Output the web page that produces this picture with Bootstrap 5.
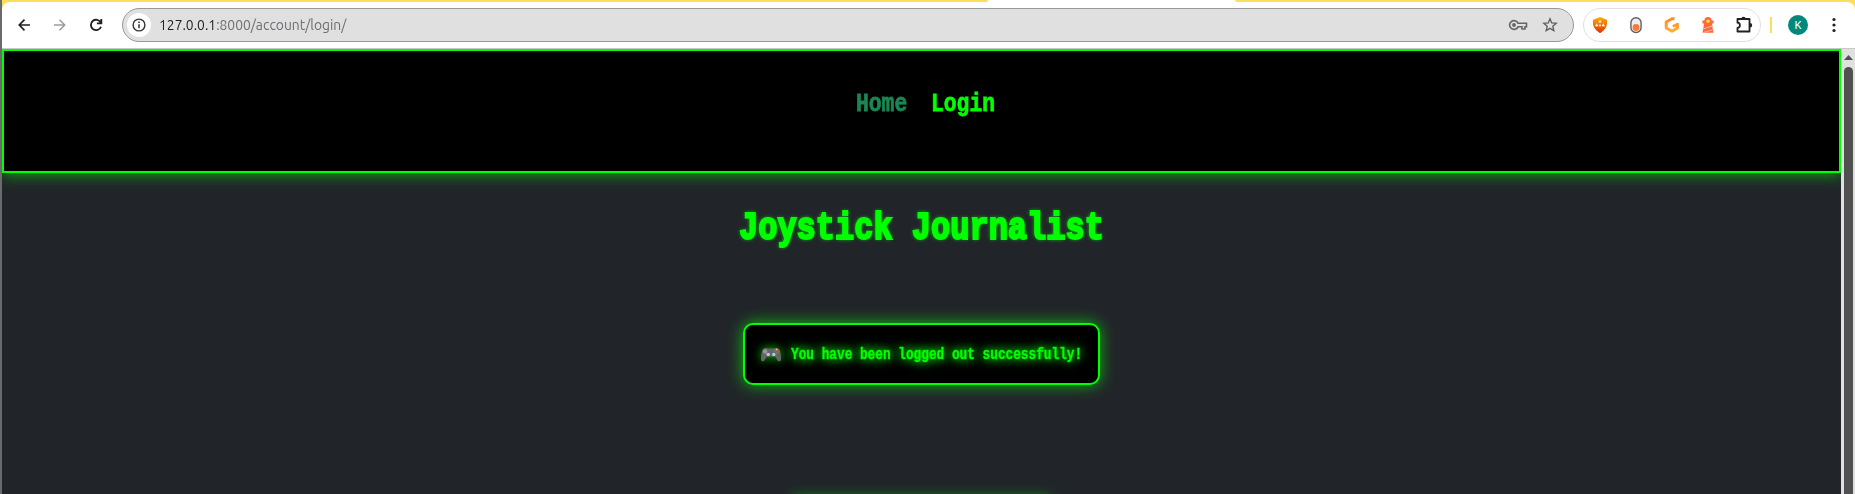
<!DOCTYPE html>
<html lang="en">
<head>
<meta charset="utf-8">
<title>Joystick Journalist</title>
<link href="https://cdn.jsdelivr.net/npm/bootstrap@5.3.0/dist/css/bootstrap.min.css" rel="stylesheet">
<style>
html,body{height:494px;overflow:hidden}
body{background:#6b6b6b;padding-left:2px}
.window{height:494px;background:#fff}
.tabs-edge{height:2px;background:#ffdd5c;padding-left:985px}
.tab-active{width:249px;height:2px;background:#fff;border-radius:3px 3px 0 0}
.toolbar{height:46px;background:#fff;border-radius:8px 8px 0 0}
.toolbar-wrap{background:#ffdd5c;border-bottom:1px solid #c9c9c9}
.nav-icons{width:120px;padding-left:13px;gap:12px}
.address{width:1452px;height:34px;border:1px solid #999;border-radius:17px;background:#e0e0e0;padding:0 15px 0 4px}
.info{width:24px;height:24px;border-radius:50%;background:#fff}
.url{font:14.4px "Ubuntu","Noto Sans",sans-serif;color:#202124;margin-left:8px;white-space:nowrap;transform-origin:left;transform:scaleX(.963)}
.url span{color:#6b6d70}
.extensions{width:178px;height:34px;border:1px solid #e1e1e4;border-radius:17px;margin-left:9px;padding:0 6px;gap:16px}
.divider{width:2px;height:16px;background:#ffdc5d;margin-left:9px}
.avatar{width:20px;height:20px;border-radius:50%;background:#00897b;color:#fff;font:11px Roboto,sans-serif;margin-left:16px}
.view{height:445px}
.page{width:1839px;background:#212529;overflow:hidden}
.site-head{height:124px;border:2px solid #0f0;background:#000;box-shadow:0 0 15px rgba(0,255,0,.75);clip-path:inset(0 0 -30px 0);padding-top:37px}
.terminal{font-family:"Liberation Mono",monospace;font-weight:700;color:#0f0;white-space:pre;display:block}
.terminal>span{display:inline-block;transform-origin:left;-webkit-text-stroke:.4px currentColor}
.menu-item{font-size:26px;line-height:32px}
.menu-item>span{transform:scaleX(.8205);-webkit-text-stroke:.8px currentColor}
.home{width:51px;color:#198754;margin-left:8px}
.login{width:64px;margin-left:24px}
.headline{width:365px;font-size:39px;line-height:52px;margin:30px auto 0;text-shadow:0 0 5px #0f0}
.headline>span{transform:scaleX(.8205);-webkit-text-stroke:2px currentColor}
.notice{width:357px;height:62px;margin:68px auto 0;border:2px solid #0f0;border-radius:10px;background:#000;box-shadow:0 0 15px rgba(0,255,0,.7);padding:2px 0 0 15px}
.notice .terminal{width:292px;font-size:16px;line-height:24px;margin-left:9px;text-shadow:0 0 10px #0f0,0 0 14px #0f0}
.notice .terminal>span{transform:scaleX(.798)}
.pad{filter:drop-shadow(0 0 5px #0c0)}
.panel{width:258px;height:40px;margin:112px auto 0;box-shadow:0 0 12px rgba(0,255,0,.5);background:#000}
.scroll{width:14px;background:#e0e0e0}
.thumb{width:9px;height:450px;background:#505050;border-radius:5px 5px 0 0;margin:7px auto 0 3px}
.arrow{display:block;margin:6px 0 0 3px}
</style>
</head>
<body>
<div class="window">
<div class="tabs-edge"><div class="tab-active"></div></div>
<div class="toolbar-wrap"><div class="toolbar d-flex align-items-center">
 <div class="nav-icons d-flex align-items-center flex-shrink-0">
  <svg width="20" height="20" viewBox="0 0 20 20" fill="none" stroke="#202124" stroke-width="1.7"><path d="M15 10H4.5M9.5 4.7 4.3 10l5.2 5.3"/></svg>
  <svg class="ms-1" width="20" height="20" viewBox="0 0 20 20" fill="none" stroke="#9d9da0" stroke-width="1.6"><path d="M3 10h10.500M8.500 4.700l5.200 5.300-5.200 5.300"/></svg>
  <svg class="ms-1" width="20" height="20" viewBox="0 0 20 20" fill="none" stroke="#202124" stroke-width="1.9"><path d="M13.800 7.700A5.200 5.200 0 1 0 14 11.700M14.300 4v4.400H9.900"/></svg>
 </div>
 <div class="address d-flex align-items-center flex-shrink-0">
  <div class="info d-flex align-items-center justify-content-center"><svg width="14" height="14" viewBox="0 0 14 14"><circle cx="7" cy="7" r="5.9" fill="none" stroke="#333" stroke-width="1.4"/><path d="M7 6.2v4M7 3.4v1.5" stroke="#333" stroke-width="1.5"/></svg></div>
  <div class="url">127.0.0.1<span>:8000/account/login/</span></div>
  <svg class="ms-auto" width="20" height="14" viewBox="0 0 20 14" fill="none" stroke="#656565" stroke-width="1.6"><path d="M10 5.2A4.4 4.400 0 1 0 10 8.800h4v2.200h3V8.800h1.500V5.200z"/><circle cx="6" cy="7" r="1.9" fill="#656565" stroke="none"/></svg>
  <svg style="margin-left:14px" width="16" height="16" viewBox="0 0 16 16" fill="none" stroke="#606060" stroke-width="1.4"><path d="m8 1.8 1.7 4.1 4.5.4-3.4 3 1 4.3L8 11.3l-3.8 2.3 1-4.3-3.4-3 4.500-.4z"/></svg>
 </div>
 <div class="extensions d-flex align-items-center flex-shrink-0">
  <svg width="20" height="18" viewBox="0 0 20 18"><defs><linearGradient id="a" x2="0" y2="1"><stop stop-color="#ffb000"/><stop offset="1" stop-color="#dc2d08"/></linearGradient><linearGradient id="g" x2="0" y2="1"><stop stop-color="#ff8b28"/><stop offset="1" stop-color="#ffae35"/></linearGradient></defs><path d="m10 1 7 2.700c.7 6.400-1.500 9.700-7 13.500-5.500-3.800-7.700-7.100-7-13.500z" fill="url(#a)"/><path d="m10 3.800 1.700 2.700H8.300zM6.700 7.300l1.700 3H5zM13.300 7.300l1.700 3h-3.400zM10 7.800l1.200 2.500H8.800z" fill="#fff"/></svg>
  <svg width="20" height="18" viewBox="0 0 20 18"><rect x="4.900" y="1.700" width="10.200" height="14.800" rx="5" fill="#eee" stroke="#5d6268" stroke-width="1.400"/><circle cx="10" cy="11.500" r="3.400" fill="#fa7935"/></svg>
  <svg width="20" height="18" viewBox="0 0 20 18"><path d="M12.500 2.800 10 2.700 4.200 6v6l5.800 3.300 5.500-3.300V8.200L10.800 10.500" fill="none" stroke="url(#g)" stroke-width="2.900" stroke-linejoin="round"/></svg>
  <svg width="20" height="18" viewBox="0 0 20 18"><path d="M10 1c2.400 0 3.600 1.500 3.600 3.500h2v3h-1.700l1.600 9.300H4.500l1.600-9.300H4.400v-3h2C6.400 2.500 7.600 1 10 1z" fill="#ff673d"/><path d="m5 13 9-3M5.500 16.500l10-3" stroke="#ffb59d" stroke-width="1"/><circle cx="10" cy="5.300" r="1.800" fill="#ffe23f"/></svg>
  <svg width="20" height="18" viewBox="0 0 20 18"><path d="M3.500 3h12v12.500h-12v-3.700c3.200-.2 3.200-4.900 0-5.100z" fill="none" stroke="#202124" stroke-width="1.800" stroke-linejoin="round"/><path d="M7.300 3a2.200 2.200 0 0 1 4.400 0zM16 7a2.200 2.200 0 0 1 0 4.400z" fill="#202124"/></svg>
 </div>
 <div class="divider"></div>
 <div class="avatar d-flex align-items-center justify-content-center flex-shrink-0">K</div>
 <svg style="margin-left:24px" width="4" height="16" viewBox="0 0 4 16" fill="#202124"><circle cx="2" cy="2.500" r="1.600"/><circle cx="2" cy="8" r="1.600"/><circle cx="2" cy="13.500" r="1.600"/></svg>
</div></div>
<div class="view d-flex">
 <main class="page flex-shrink-0">
  <header class="site-head d-flex justify-content-center">
   <a class="terminal menu-item home text-decoration-none"><span>Home</span></a>
   <a class="terminal menu-item login text-decoration-none"><span>Login</span></a>
  </header>
  <h1 class="terminal headline"><span>Joystick Journalist</span></h1>
  <div class="notice d-flex align-items-center">
   <svg class="pad" width="22" height="16" viewBox="0 0 22 16"><path d="M4 1.500Q5.500.5 8 1.500h6q2.500-1 4 0c2 .6 3 6.500 3 10.500 0 3-2.700 3-3.800.8L15 9.500H7l-2.200 3.300C3.700 15 1 15 1 12 1 8 2 2.100 4 1.500z" fill="#68636d"/><circle cx="5.200" cy="4.500" r="2.200" fill="#99949d"/><circle cx="8.200" cy="7.500" r="1.700" fill="#c8c4cb"/><circle cx="13.800" cy="7.500" r="1.700" fill="#c8c4cb"/><circle cx="16.700" cy="2.500" r="1.100" fill="#f7ba22"/><circle cx="18.700" cy="4.500" r="1.300" fill="#f13d42"/><circle cx="14.800" cy="4.500" r="1" fill="#268de8"/><circle cx="16.700" cy="6" r="1" fill="#31a83c"/></svg>
   <div class="terminal"><span>You have been logged out successfully!</span></div>
  </div>
  <div class="panel"></div>
 </main>
 <div class="scroll flex-shrink-0"><svg class="arrow" width="9" height="5"><path d="M0 5 4.500 0 9 5z" fill="#505050"/></svg><div class="thumb"></div></div>
</div>
</div>
<script src="https://cdn.jsdelivr.net/npm/bootstrap@5.3.0/dist/js/bootstrap.bundle.min.js"></script>
</body>
</html>
